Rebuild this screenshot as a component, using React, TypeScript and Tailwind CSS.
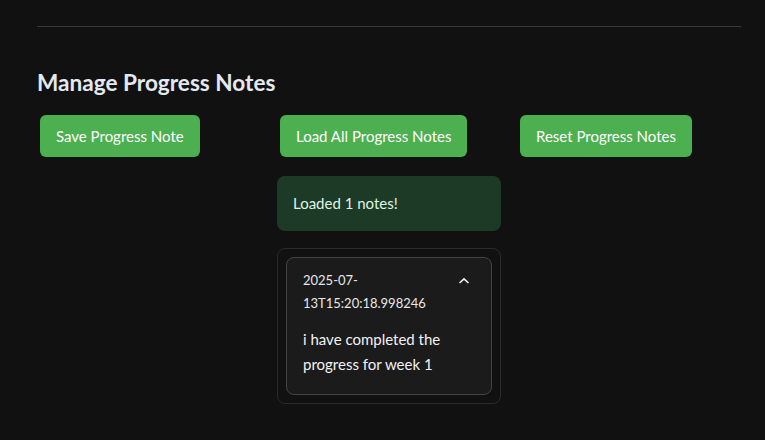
import React from 'react';

const font = { fontFamily: 'Lato, "Noto Sans", sans-serif' };

function ProgressButton({ label }: { label: string }) {
  return (
    <button className="ml-[3px] h-[42px] rounded-[6px] bg-[#4caf50] px-4 text-[15px] text-white">
      {label}
    </button>
  );
}

export default function App() {
  return (
    <div className="h-[440px] w-[765px] overflow-hidden bg-[#111111] text-[#fafafa]" style={font}>
      <div className="px-[37px] pt-[26px]">
        <div className="h-px w-[704px] bg-[#3a3a3a]" />
        <h3 className="mt-[38px] text-[22.6px] font-bold leading-[36px] text-[#e4e8f0]">Manage Progress Notes</h3>

        <div className="mt-[14px] grid w-[704px] grid-cols-3 gap-4">
          <div>
            <ProgressButton label="Save Progress Note" />
          </div>

          <div className="flex flex-col">
            <div>
              <ProgressButton label="Load All Progress Notes" />
            </div>
            <div className="mt-[19px] flex h-[55px] items-center rounded-[8px] bg-[#1d3a26] px-4 text-[15px] text-[#dff5e4]">
              Loaded 1 notes!
            </div>
            <div className="mt-[17px] rounded-[8px] border border-[#2a2a2a] p-[8px]">
              <div className="rounded-[8px] border border-[#444444] bg-[#1b1b1b] px-4 pb-[17px] pt-[11px]">
                <div className="flex items-start justify-between">
                  <div className="text-[13px] leading-[23px] text-[#e8e8e8]">
                    2025-07-
                    <br />
                    13T15:20:18.998246
                  </div>
                  <svg width="12" height="12" viewBox="0 0 12 12" className="mr-[5px] mt-[6px]">
                    <path d="M1.5 8 L6 3.8 L10.5 8" fill="none" stroke="#f0f0f0" strokeWidth="1.6" />
                  </svg>
                </div>
                <p className="mt-[12px] text-[15px] leading-[25px] text-[#f2f2f2]">
                  i have completed the
                  <br />
                  progress for week 1
                </p>
              </div>
            </div>
          </div>

          <div>
            <ProgressButton label="Reset Progress Notes" />
          </div>
        </div>
      </div>
    </div>
  );
}
